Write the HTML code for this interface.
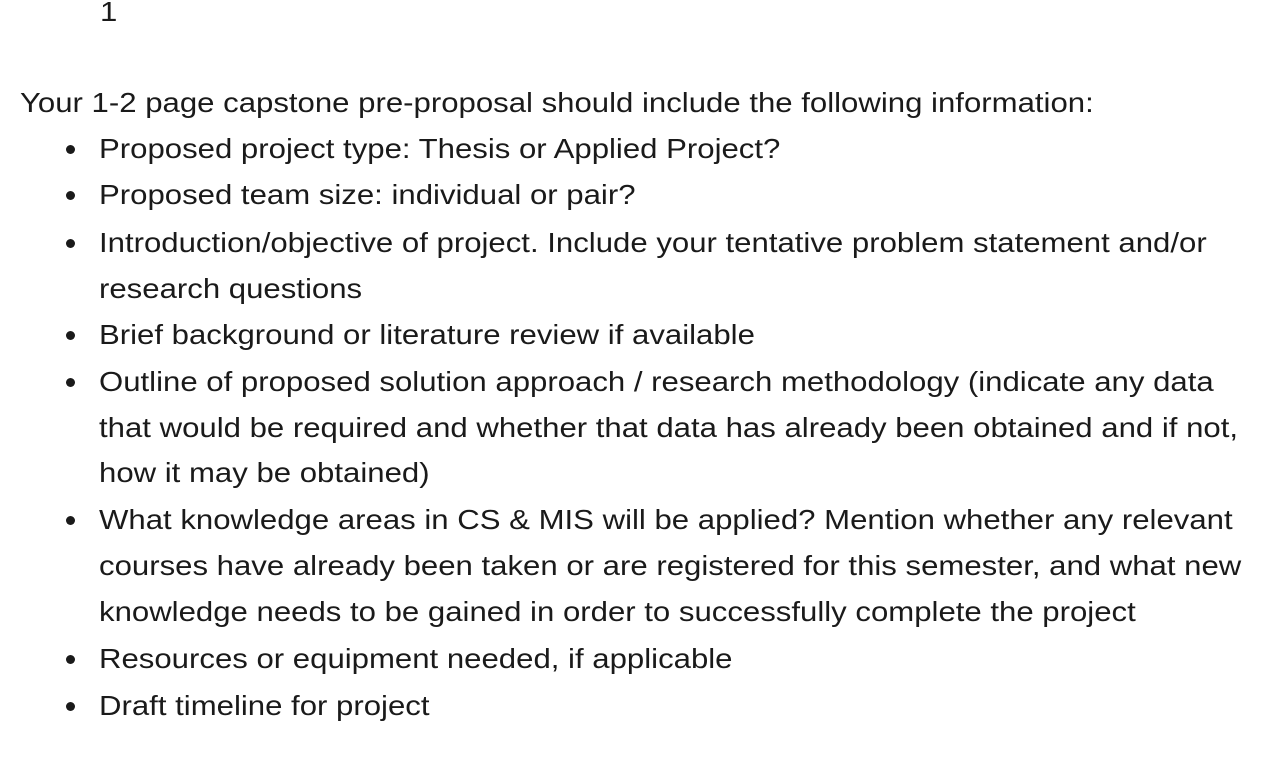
<!DOCTYPE html>
<html><head><meta charset="utf-8"><style>
html,body{margin:0;padding:0;background:#fff;width:1286px;height:784px;overflow:hidden}
body{font-family:"Liberation Sans",Arial,sans-serif;font-size:28px;color:#1a1a1a;position:relative}
.l{position:absolute;white-space:nowrap;line-height:46px;height:46px;transform:scaleX(1.112);transform-origin:0 0}
.b{position:absolute;left:66px;width:9px;height:9px;border-radius:50%;background:#1a1a1a}
</style></head><body>
<div class="l" style="left:100px;top:-11px">1</div>
<div class="l" style="left:20px;top:80px">Your 1-2 page capstone pre-proposal should include the following information:</div>

<div class="b" style="top:145px"></div>
<div class="l" style="left:99px;top:126px">Proposed project type: Thesis or Applied Project?</div>
<div class="b" style="top:191px"></div>
<div class="l" style="left:99px;top:172px">Proposed team size: individual or pair?</div>
<div class="b" style="top:239px"></div>
<div class="l" style="left:99px;top:220px">Introduction/objective of project. Include your tentative problem statement and/or</div>
<div class="l" style="left:99px;top:266px">research questions</div>
<div class="b" style="top:331px"></div>
<div class="l" style="left:99px;top:312px">Brief background or literature review if available</div>
<div class="b" style="top:378px"></div>
<div class="l" style="left:99px;top:359px">Outline of proposed solution approach / research methodology (indicate any data</div>
<div class="l" style="left:99px;top:405px">that would be required and whether that data has already been obtained and if not,</div>
<div class="l" style="left:99px;top:450px">how it may be obtained)</div>
<div class="b" style="top:516px"></div>
<div class="l" style="left:99px;top:497px">What knowledge areas in CS &amp; MIS will be applied? Mention whether any relevant</div>
<div class="l" style="left:99px;top:543px">courses have already been taken or are registered for this semester, and what new</div>
<div class="l" style="left:99px;top:589px">knowledge needs to be gained in order to successfully complete the project</div>
<div class="b" style="top:655px"></div>
<div class="l" style="left:99px;top:636px">Resources or equipment needed, if applicable</div>
<div class="b" style="top:702px"></div>
<div class="l" style="left:99px;top:683px">Draft timeline for project</div>
</body></html>
